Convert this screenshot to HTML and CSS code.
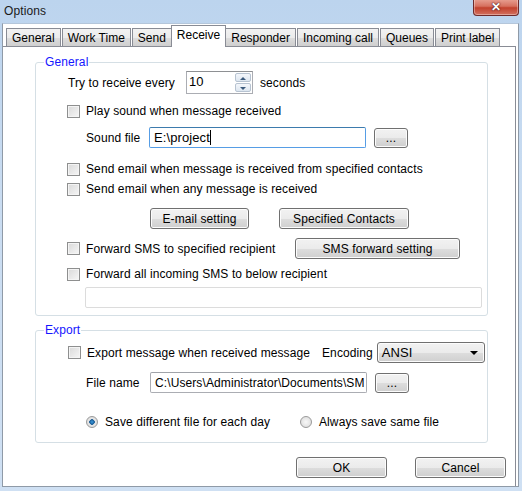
FILE: index.html
```html
<!DOCTYPE html>
<html lang="en">

<head>
    <meta charset="UTF-8">
    <title>Options</title>
    <link rel="stylesheet" href="styles.css">
</head>

<body>
    <div class="window">
        <div class="titlebar">
            <span class="title">Options</span>
            <button class="close" type="button">&#x2715;</button>
        </div>

        <div class="client">
            <div class="tabs">
                <div class="tab">General</div>
                <div class="tab">Work Time</div>
                <div class="tab">Send</div>
                <div class="tab active">Receive</div>
                <div class="tab">Responder</div>
                <div class="tab">Incoming call</div>
                <div class="tab">Queues</div>
                <div class="tab">Print label</div>
            </div>

            <div class="panel">
                <fieldset class="group general">
                    <legend>General</legend>

                    <div class="row r-spin">
                        <span class="lbl lbl-every">Try to receive every</span>
                        <div class="spin">
                            <span class="spin-value">10</span>
                            <div class="spin-btns">
                                <span class="spin-btn up"></span>
                                <span class="spin-btn down"></span>
                            </div>
                        </div>
                        <span class="lbl unit">seconds</span>
                    </div>

                    <label class="row check r-sound">
                        <input type="checkbox">
                        <span>Play sound when message received</span>
                    </label>

                    <div class="row r-file indent">
                        <span class="lbl lbl-file">Sound file</span>
                        <div class="field focus w-file">E:\project<span class="caret"></span></div>
                        <button class="btn dots" type="button">...</button>
                    </div>

                    <label class="row check r-mail1">
                        <input type="checkbox">
                        <span>Send email when message is received from specified contacts</span>
                    </label>

                    <label class="row check r-mail2">
                        <input type="checkbox">
                        <span>Send email when any message is received</span>
                    </label>

                    <div class="row r-btns">
                        <button class="btn w-mail" type="button">E-mail setting</button>
                        <button class="btn w-contacts" type="button">Specified Contacts</button>
                    </div>

                    <div class="row r-fwd">
                        <label class="check fwd-check">
                            <input type="checkbox">
                            <span>Forward SMS to specified recipient</span>
                        </label>
                        <button class="btn w-fwd" type="button">SMS forward setting</button>
                    </div>

                    <label class="row check r-all">
                        <input type="checkbox">
                        <span>Forward all incoming SMS to below recipient</span>
                    </label>

                    <div class="row r-recipient">
                        <div class="field light w-recipient"></div>
                    </div>
                </fieldset>

                <fieldset class="group export">
                    <legend>Export</legend>

                    <div class="row r-export">
                        <label class="check export-check">
                            <input type="checkbox">
                            <span>Export message when received message</span>
                        </label>
                        <span class="lbl">Encoding</span>
                        <div class="select">
                            <span>ANSI</span>
                            <span class="arrow"></span>
                        </div>
                    </div>

                    <div class="row r-name indent">
                        <span class="lbl lbl-name">File name</span>
                        <div class="field w-name">C:\Users\Administrator\Documents\SM</div>
                        <button class="btn dots" type="button">...</button>
                    </div>

                    <div class="row r-radio indent">
                        <label class="radio first">
                            <input type="radio" name="save" checked>
                            <span>Save different file for each day</span>
                        </label>
                        <label class="radio">
                            <input type="radio" name="save">
                            <span>Always save same file</span>
                        </label>
                    </div>
                </fieldset>

                <div class="actions">
                    <button class="btn w-action" type="button">OK</button>
                    <button class="btn w-action" type="button">Cancel</button>
                </div>
            </div>
        </div>
    </div>
</body>

</html>
```

FILE: styles.css
```css
body {
    margin: 0;
    font-family: 'Liberation Sans', Arial, sans-serif;
    font-size: 12px;
    letter-spacing: 0.1px;
    color: #000;
}

.window {
    width: 522px;
    height: 491px;
    background: linear-gradient(#bcd4ee, #c9dcf1 40%, #cfe0f3);
    display: flex;
    flex-direction: column;
    box-sizing: border-box;
}

/* title bar */

.titlebar {
    height: 23px;
    display: flex;
    justify-content: space-between;
    align-items: flex-start;
    flex-shrink: 0;
}

.title {
    margin: 4px 0 0 4px;
    font-size: 12px;
    color: #1a1a1a;
}

.close {
    width: 46px;
    height: 17px;
    margin: -1px 3px 0 0;
    border: 1px solid #6e2b2b;
    border-top: none;
    border-radius: 0 0 4px 4px;
    background: linear-gradient(#e8a294, #d6705f 45%, #c2412d 55%, #d27160);
    color: #fff;
    font-size: 12px;
    font-weight: bold;
    line-height: 15px;
    padding: 0;
    box-shadow: inset 0 0 0 1px rgba(255, 255, 255, 0.35);
    text-shadow: 0 0 2px #4a1414, 0 0 1px #4a1414;
}

/* client area */

.client {
    flex: 1;
    margin: 0 3px 4px 2px;
    background: #fff;
    border: 1px solid #8f9aa7;
    border-top-color: #b4c6da;
    display: flex;
    flex-direction: column;
}

.tabs {
    display: flex;
    align-items: flex-end;
    height: 21px;
    padding: 1px 0 0 3px;
    flex-shrink: 0;
    letter-spacing: 0;
}

.tab {
    height: 17px;
    line-height: 18px;
    padding: 0 5px;
    border: 1px solid #898c95;
    border-bottom: none;
    margin-right: 1px;
    background: linear-gradient(#f2f2f2, #ebebeb 50%, #dddddd 51%, #cfcfcf);
    white-space: nowrap;
}

.tab.active {
    height: 21px;
    line-height: 19px;
    background: #fff;
    margin: 0 -1px -1px -2px;
    padding: 0 5px;
    position: relative;
}

.tab.active + .tab {
    margin-left: 0;
}

.panel {
    flex: 1;
    margin-right: 2px;
    border-top: 1px solid #898c95;
    border-right: 1px solid #898c95;
    display: flex;
    flex-direction: column;
}

/* group boxes */

.group {
    margin: 0 0 0 32px;
    width: 453px;
    box-sizing: border-box;
    border: 1px solid #d5dfe5;
    border-radius: 3px;
    padding: 0 0 0 31px;
    min-width: 0;
}

.group legend {
    color: #1515ff;
    line-height: 14px;
    padding: 0 1px;
    margin-left: -23px;
    margin-bottom: -2px;
}

.general {
    margin-top: 8px;
    padding-bottom: 7px;
}

.export {
    margin-top: 7px;
    padding-bottom: 11px;
}

.row {
    display: flex;
    align-items: center;
}

.indent {
    padding-left: 19px;
}

.r-spin { height: 23px; margin-top: 4px; }
.r-sound { height: 18px; margin-top: 8px; }
.r-file { height: 21px; margin-top: 7px; }
.r-mail1 { height: 18px; margin-top: 12px; }
.r-mail2 { height: 18px; margin-top: 2px; }
.r-btns { height: 21px; margin-top: 10px; padding-left: 83px; gap: 30px; }
.r-fwd { height: 21px; margin-top: 9px; }
.r-all { height: 18px; margin-top: 6px; }
.r-recipient { height: 21px; margin-top: 4px; padding-left: 18px; }

.r-export { height: 21px; margin-top: 7px; }
.r-name { height: 21px; margin-top: 9px; }
.r-radio { height: 18px; margin-top: 20px; }

.lbl {
    white-space: nowrap;
}

.lbl-every {
    width: 119px;
    padding-left: 1px;
    box-sizing: border-box;
}

.unit {
    margin-left: 7px;
}

.lbl-file {
    width: 63px;
}

.lbl-name {
    width: 64px;
}

/* spin box */

.spin {
    width: 67px;
    height: 23px;
    box-sizing: border-box;
    border: 1px solid #abadb3;
    border-top-color: #8e9093;
    display: flex;
    justify-content: space-between;
}

.spin-value {
    padding: 2px 0 0 2px;
    font-size: 13px;
}

.spin-btns {
    width: 16px;
    display: flex;
    flex-direction: column;
    gap: 1px;
    padding: 1px 1px 1px 0;
}

.spin-btn {
    flex: 1;
    border: 1px solid #b7c3d1;
    border-radius: 2px;
    background: linear-gradient(#f4f7fb, #dde6f0);
    position: relative;
}

.spin-btn::after {
    content: "";
    position: absolute;
    left: 4px;
    top: 3px;
    border: 3px solid transparent;
}

.spin-btn.up::after {
    top: 0;
    border-bottom: 3px solid #3c5a7d;
}

.spin-btn.down::after {
    top: 3px;
    border-top: 3px solid #3c5a7d;
}

/* checkboxes and radios */

.check,
.radio {
    display: flex;
    align-items: center;
    white-space: nowrap;
}

.check input,
.radio input {
    appearance: none;
    margin: 0 6px 0 0;
    flex-shrink: 0;
}

.check input {
    width: 13px;
    height: 13px;
    border: 1px solid #8e8f8f;
    background: linear-gradient(135deg, #d9d9d9, #f6f6f6);
    box-shadow: inset 0 0 0 1px #f4f4f4;
    box-sizing: border-box;
}

.fwd-check {
    width: 228px;
}

.export-check {
    width: 254px;
    margin-left: 1px;
}

.radio input {
    width: 12px;
    height: 12px;
    border-radius: 50%;
    border: 1px solid #9a9a9a;
    background: radial-gradient(circle, #f8f8f8, #d8d8d8);
    box-sizing: border-box;
    margin-right: 7px;
}

.radio input:checked {
    background: radial-gradient(circle, #3b9adf 0, #1a5a92 2.5px, #e8e8e8 3px, #d4d4d4);
}

.radio.first {
    width: 214px;
}

/* text fields */

.field {
    height: 21px;
    box-sizing: border-box;
    border: 1px solid #abadb3;
    border-top-color: #a0a3a9;
    border-radius: 2px;
    padding: 2px 0 0 4px;
    font-size: 13px;
    white-space: nowrap;
    overflow: hidden;
}

.field.focus {
    border-color: #569de5;
    border-top-color: #3d7bad;
}

.field.light {
    border-color: #dcdcdc;
}

.caret {
    display: inline-block;
    width: 1px;
    height: 15px;
    background: #000;
    vertical-align: -3px;
}

.w-file { width: 217px; }
.w-name { width: 217px; font-size: 12px; padding-top: 3px; }
.w-recipient { width: 397px; }

/* buttons */

.btn {
    height: 21px;
    box-sizing: border-box;
    border: 1px solid #707070;
    border-radius: 3px;
    background: linear-gradient(#f2f2f2, #ebebeb 50%, #dddddd 51%, #cfcfcf);
    box-shadow: inset 0 0 0 1px #fcfcfc;
    font-family: inherit;
    font-size: 12px;
    letter-spacing: inherit;
    color: #000;
    padding: 0;
}

.dots {
    width: 34px;
    height: 20px;
    margin-left: 8px;
    line-height: 14px;
}

.w-mail { width: 99px; }
.w-contacts { width: 130px; }
.w-fwd { width: 165px; }
.w-action { width: 91px; }

/* select */

.select {
    width: 108px;
    height: 21px;
    box-sizing: border-box;
    margin-left: 4px;
    border: 1px solid #707070;
    border-radius: 3px;
    background: linear-gradient(#f2f2f2, #ebebeb 50%, #dddddd 51%, #cfcfcf);
    box-shadow: inset 0 0 0 1px #fcfcfc;
    display: flex;
    align-items: center;
    justify-content: space-between;
    padding: 0 6px 0 4px;
    font-size: 13px;
}

.arrow {
    border: 4px solid transparent;
    border-top: 4px solid #000;
    margin-top: 4px;
}

/* dialog buttons */

.actions {
    display: flex;
    justify-content: flex-end;
    gap: 28px;
    margin-top: 14px;
    padding-right: 9px;
}
```
